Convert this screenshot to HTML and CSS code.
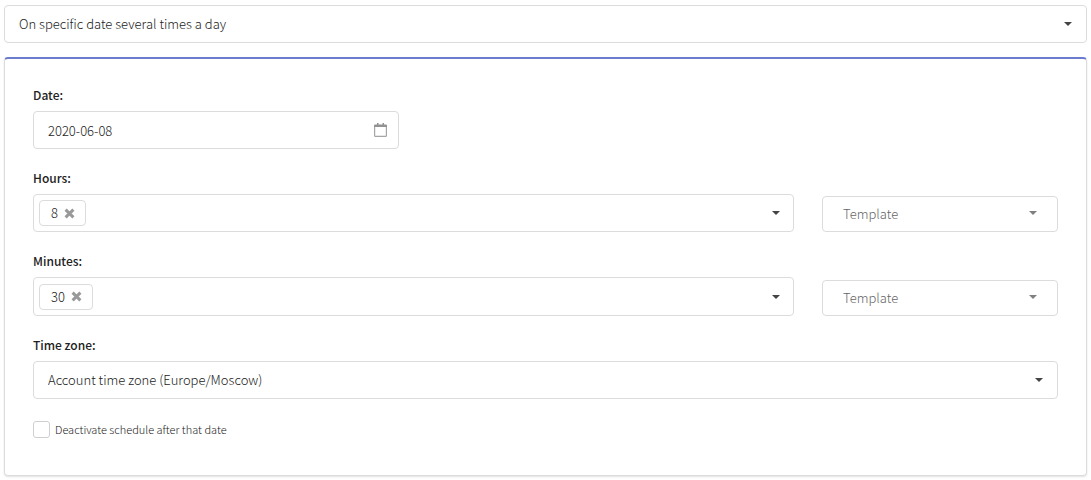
FILE: index.html
```html
<!DOCTYPE html>
<html lang="en">
<head>
<meta charset="utf-8">
<meta name="viewport" content="width=device-width, initial-scale=1">
<title>Schedule</title>
<link rel="stylesheet" href="styles.css">
</head>
<body>
<form class="schedule">
  <div class="control">
    <select class="input input-main" aria-label="Schedule type">
      <option>On specific date several times a day</option>
    </select>
    <svg class="caret" viewBox="0 0 8 4" aria-hidden="true"><path d="M0 0h8L4 4z"/></svg>
  </div>

  <section class="card">
    <div class="field field-date">
      <label class="label" for="date">Date:</label>
      <div class="control">
        <input class="input" id="date" type="text" value="2020-06-08">
        <svg class="calendar" viewBox="0 0 13 14" aria-hidden="true">
          <path class="calendar-frame" d="M.6 3v9.500q0 .900.900.900h10q.900 0 .900-.900V3"/>
          <path class="calendar-top" d="M0 4V2.500Q0 1.500 1 1.500h2V0h1.500v1.500h4V0H10v1.500h2q1 0 1 1V4z"/>
        </svg>
      </div>
    </div>

    <div class="row">
      <div class="field">
        <span class="label" id="hours-label">Hours:</span>
        <div class="input tags" role="group" aria-labelledby="hours-label">
          <span class="tag">8
            <button class="remove" type="button" aria-label="Remove 8"><svg viewBox="0 0 11 11" aria-hidden="true"><path d="M1.600 1.600l7.800 7.800M9.400 1.600L1.600 9.400"/></svg></button>
          </span>
          <button class="toggle" type="button" aria-label="Choose hours"><svg class="caret" viewBox="0 0 8 4" aria-hidden="true"><path d="M0 0h8L4 4z"/></svg></button>
        </div>
      </div>
      <div class="control template">
        <select class="input" aria-label="Hours template"><option>Template</option></select>
        <svg class="caret" viewBox="0 0 8 4" aria-hidden="true"><path d="M0 0h8L4 4z"/></svg>
      </div>
    </div>

    <div class="row">
      <div class="field">
        <span class="label" id="minutes-label">Minutes:</span>
        <div class="input tags tags-minutes" role="group" aria-labelledby="minutes-label">
          <span class="tag">30
            <button class="remove" type="button" aria-label="Remove 30"><svg viewBox="0 0 11 11" aria-hidden="true"><path d="M1.600 1.600l7.800 7.800M9.400 1.600L1.600 9.400"/></svg></button>
          </span>
          <button class="toggle" type="button" aria-label="Choose minutes"><svg class="caret" viewBox="0 0 8 4" aria-hidden="true"><path d="M0 0h8L4 4z"/></svg></button>
        </div>
      </div>
      <div class="control template">
        <select class="input" aria-label="Minutes template"><option>Template</option></select>
        <svg class="caret" viewBox="0 0 8 4" aria-hidden="true"><path d="M0 0h8L4 4z"/></svg>
      </div>
    </div>

    <div class="field">
      <label class="label" for="zone">Time zone:</label>
      <div class="control">
        <select class="input" id="zone"><option>Account time zone (Europe/Moscow)</option></select>
        <svg class="caret" viewBox="0 0 8 4" aria-hidden="true"><path d="M0 0h8L4 4z"/></svg>
      </div>
    </div>

    <label class="check">
      <input class="checkbox" type="checkbox">
      <span>Deactivate schedule after that date</span>
    </label>
  </section>
</form>
</body>
</html>
```
FILE: styles.css
```css
* {
  box-sizing: border-box;
}

body {
  margin: 0;
  padding: 5px 4px 4px;
  background: #fff;
  color: #222;
  font: 300 13px/20px "Noto Sans CJK SC", "Open Sans", sans-serif;
}

.schedule {
  display: flex;
  flex-direction: column;
  gap: 14px;
}

.control {
  position: relative;
  display: flex;
}

.input {
  width: 100%;
  height: 38px;
  margin: 0;
  padding: 0 14px;
  border: 1px solid #dcdcdd;
  border-radius: 4px;
  background: #fff;
  color: #222;
  font: inherit;
  appearance: none;
}

.caret {
  position: absolute;
  top: 50%;
  right: 15px;
  width: 8px;
  height: 4px;
  margin-top: -2px;
  fill: #444;
  pointer-events: none;
}

.card {
  display: flex;
  flex-direction: column;
  gap: 20px;
  padding: 27px 28px 36px;
  border: 1px solid #dcdcdd;
  border-top: 2px solid #6b7ccf;
  border-radius: 4px;
  box-shadow: 0 1px 2px rgba(0, 0, 0, 0.12);
}

.field {
  display: flex;
  flex-direction: column;
  gap: 7px;
}

.field-date {
  width: 366px;
  max-width: 100%;
}

.label {
  font-size: 12px;
  font-weight: 500;
  line-height: 18px;
}

.calendar {
  position: absolute;
  top: 12px;
  right: 12px;
  width: 13px;
  height: 14px;
  pointer-events: none;
}

.calendar-frame {
  fill: none;
  stroke: #a5a5a5;
  stroke-width: 1.2;
}

.calendar-top {
  fill: #929292;
}

.row {
  display: grid;
  grid-template-columns: minmax(0, 1fr) 236px;
  align-items: end;
  gap: 28px;
}

.tags {
  position: relative;
  display: flex;
  align-items: center;
  padding: 0 5px;
}

.tags-minutes {
  height: 39px;
}

.tag {
  display: flex;
  align-items: center;
  gap: 6px;
  height: 26px;
  padding: 0 10px 0 11px;
  border: 1px solid #dcdcdd;
  border-radius: 4px;
}

.remove,
.toggle {
  padding: 0;
  border: 0;
  background: none;
  cursor: pointer;
}

.remove svg {
  display: block;
  width: 11px;
  height: 11px;
  fill: none;
  stroke: #999;
  stroke-width: 3;
}

.toggle {
  position: relative;
  align-self: stretch;
  width: 32px;
  margin-left: auto;
}

.toggle .caret {
  right: 8px;
}

.template .input {
  height: 36px;
  padding: 0 20px;
  color: #666;
}

.template .caret {
  right: 21px;
  margin-top: -3px;
  fill: #808080;
}

.check {
  display: flex;
  align-items: center;
  align-self: flex-start;
  gap: 5px;
  font-size: 11px;
}

.checkbox {
  width: 17px;
  height: 17px;
  margin: 0;
  border: 1px solid #cfcfcf;
  border-radius: 3px;
  background: #fff;
  appearance: none;
}

.checkbox:checked {
  background: #6b7ccf;
}
```
